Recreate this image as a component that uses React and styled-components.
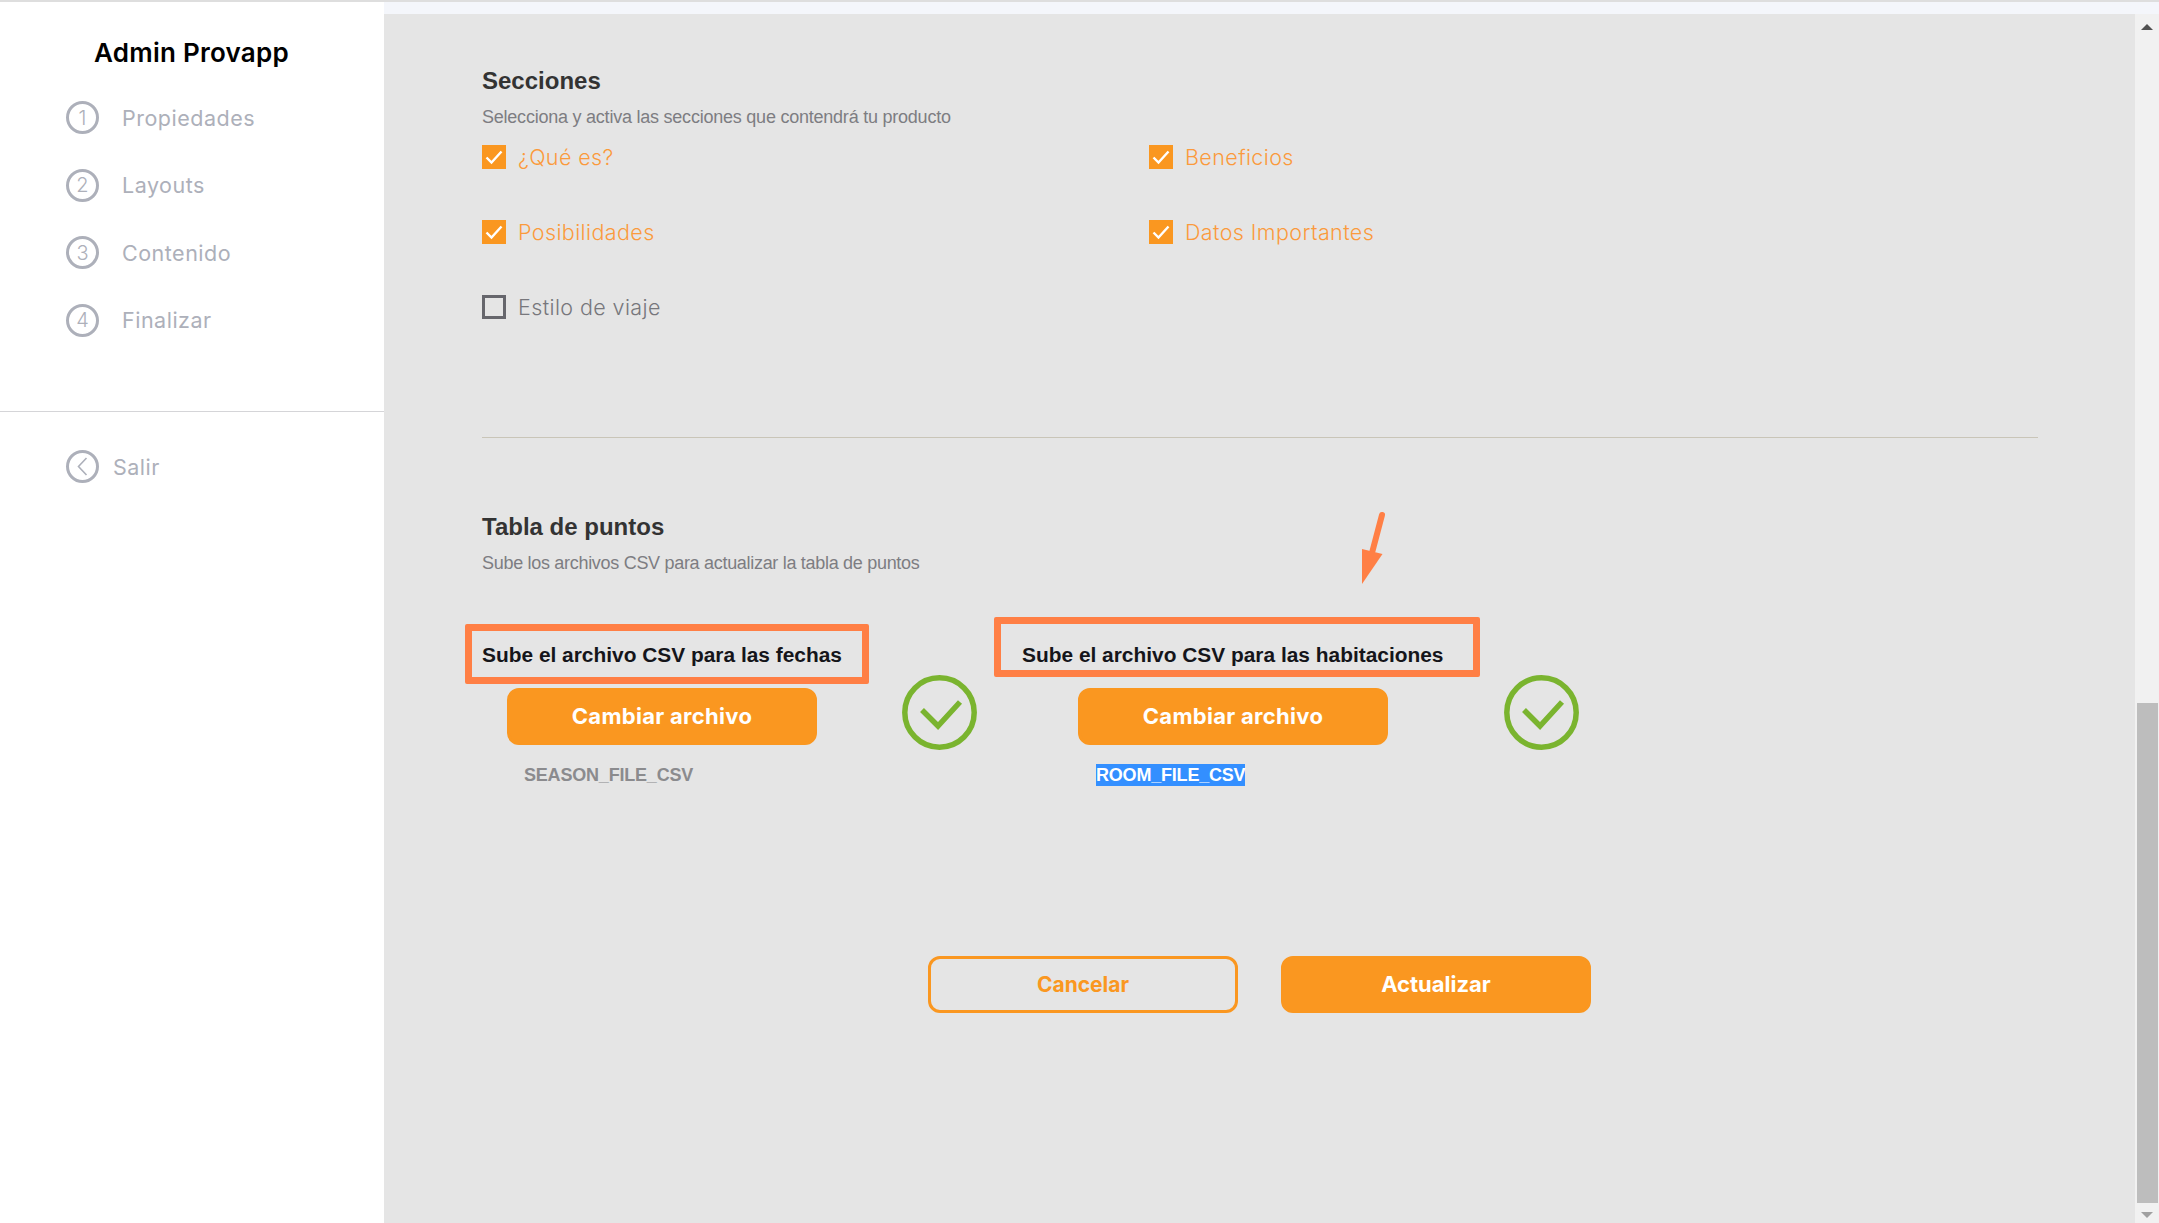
import React from 'react';
import styled, { createGlobalStyle } from 'styled-components';

const GlobalStyle = createGlobalStyle`
  html, body {
    margin: 0;
    padding: 0;
    height: 100%;
    overflow: hidden;
    background: #fff;
  }
  * {
    box-sizing: border-box;
  }
`;

const ORANGE = '#fa9720';
const MARK = '#ff7f45';
const GREEN = '#7ab42f';
const SIDE_FONT = "Inter, 'Open Sans', sans-serif";
const BODY_FONT = "'Liberation Sans', Arial, sans-serif";

const Page = styled.div`
  width: 2159px;
  height: 1223px;
  display: flex;
  flex-direction: column;
  overflow: hidden;
`;

const TopEdge = styled.div`
  height: 2px;
  flex: none;
  background: #dedede;
`;

const Body = styled.div`
  flex: 1;
  display: flex;
  min-height: 0;
`;

const Sidebar = styled.aside`
  width: 384px;
  flex: none;
  background: #fff;
  font-family: ${SIDE_FONT};
`;

const Brand = styled.h1`
  margin: 0;
  padding: 36px 0 0 94px;
  font-size: 26px;
  line-height: 30px;
  font-weight: 600;
  letter-spacing: 0.25px;
  color: #000;
  white-space: nowrap;
`;

const Steps = styled.ul`
  list-style: none;
  margin: 0;
  padding: 33px 0 0 66px;
  display: flex;
  flex-direction: column;
  gap: 34.6px;
  height: 344px;
  border-bottom: 1px solid #d5d5d8;
`;

const Step = styled.li`
  display: flex;
  align-items: center;
  height: 33px;
  gap: ${({ $gap }) => $gap || 23}px;
  color: #adb0ba;
  font-size: 21.5px;
  letter-spacing: 0.5px;
`;

const StepCircle = styled.span`
  width: 33px;
  height: 33px;
  flex: none;
  border: 3px solid #adb0ba;
  border-radius: 50%;
  display: flex;
  align-items: center;
  justify-content: center;
  font-size: 20px;
  font-weight: 300;
  letter-spacing: 0;
`;

const ExitList = styled.div`
  padding: 38px 0 0 66px;
`;

const Content = styled.div`
  flex: 1;
  min-width: 0;
  display: flex;
  flex-direction: column;
`;

const TopBand = styled.div`
  height: 12px;
  flex: none;
  background: #f4f6fb;
`;

const ContentRow = styled.div`
  flex: 1;
  display: flex;
  min-height: 0;
`;

const Main = styled.main`
  flex: 1;
  min-width: 0;
  background: #e5e5e5;
  padding: 52px 97px 0 98px;
  font-family: ${BODY_FONT};
`;

const SectionTitle = styled.h2`
  margin: ${({ $top }) => $top || 0}px 0 0;
  font-size: 24px;
  line-height: 30px;
  font-weight: 700;
  color: #333;
`;

const SectionHint = styled.p`
  margin: 9px 0 0;
  font-size: 18px;
  line-height: 24px;
  color: #7d7d82;
  letter-spacing: ${({ $spacing }) => $spacing || -0.23}px;
`;

const OptionGrid = styled.div`
  margin-top: 16px;
  display: grid;
  grid-template-columns: 667px 1fr;
  grid-auto-rows: 24px;
  row-gap: 51px;
`;

const Option = styled.label`
  display: flex;
  align-items: center;
  gap: 12px;
  font-family: ${SIDE_FONT};
  font-size: 21.5px;
  font-weight: 300;
  letter-spacing: 0.4px;
  color: ${({ $on }) => ($on ? '#fb9a3c' : '#77777c')};
`;

const Box = styled.span`
  width: 24px;
  height: 24px;
  flex: none;
  display: flex;
  align-items: center;
  justify-content: center;
  background: ${({ $on }) => ($on ? ORANGE : 'transparent')};
  border: ${({ $on }) => ($on ? 'none' : '3px solid #66666c')};
`;

const Divider = styled.hr`
  margin: 118px 0 0;
  border: none;
  height: 1px;
  background: #c9c5b8;
`;

const UploadRow = styled.div`
  margin-top: 68px;
  display: grid;
  grid-template-columns: 540px 1fr;
`;

const UploadColumn = styled.div`
  display: flex;
  flex-direction: column;
  align-items: flex-start;
`;

const UploadLabel = styled.div`
  position: relative;
  font-size: 20.9px;
  line-height: 24px;
  font-weight: 700;
  color: #15151a;
  white-space: nowrap;
`;

const MarkBox = styled.span`
  position: absolute;
  left: ${({ $left }) => $left}px;
  top: ${({ $top }) => $top}px;
  width: ${({ $width }) => $width}px;
  height: 60px;
  border: 7px solid ${MARK};
  border-radius: 2px;
`;

const ArrowMark = styled.svg`
  position: absolute;
  left: 336px;
  top: -132px;
`;

const UploadActions = styled.div`
  margin-top: 8px;
  display: flex;
  align-items: flex-start;
  padding-left: ${({ $indent }) => $indent}px;
  gap: ${({ $gap }) => $gap}px;
`;

const OrangeButton = styled.button`
  width: 310px;
  height: 57px;
  flex: none;
  margin-top: ${({ $top }) => $top || 0}px;
  border: 3px solid ${ORANGE};
  border-radius: 12px;
  background: ${({ $outline }) => ($outline ? 'transparent' : ORANGE)};
  color: ${({ $outline }) => ($outline ? ORANGE : '#fff')};
  font-family: ${SIDE_FONT};
  font-size: ${({ $size }) => $size || 22}px;
  font-weight: 700;
  letter-spacing: ${({ $spacing }) => $spacing || 0}px;
  padding: 0 0 1px;
`;

const FileName = styled.div`
  margin: 14px 0 0 ${({ $indent }) => $indent}px;
  font-size: 18px;
  line-height: 22px;
  font-weight: 700;
  letter-spacing: -0.2px;
  color: ${({ $selected }) => ($selected ? '#fff' : '#8b8b8e')};
  background: ${({ $selected }) => ($selected ? '#338fff' : 'transparent')};
`;

const FormActions = styled.div`
  margin: 170px 0 0 446px;
  display: flex;
  gap: 43px;
`;

const Scrollbar = styled.div`
  width: 24px;
  flex: none;
  background: #f1f1f1;
  display: flex;
  flex-direction: column;
  align-items: center;
`;

const ScrollUp = styled.span`
  margin-top: 10px;
  width: 0;
  height: 0;
  border-left: 6px solid transparent;
  border-right: 6px solid transparent;
  border-bottom: 6px solid #505050;
`;

const ScrollThumb = styled.div`
  margin: 673px 0 0 1px;
  width: 21px;
  height: 500px;
  background: #bdbdbd;
`;

const ScrollDown = styled.span`
  margin-top: 9px;
  width: 0;
  height: 0;
  border-left: 6px solid transparent;
  border-right: 6px solid transparent;
  border-top: 6px solid #a0a0a0;
`;

const CheckMark = () => (
  <svg width="18" height="15" viewBox="0 0 18 15" fill="none">
    <path d="M1.5 7.5 L6.5 12.5 L16.5 1.5" stroke="#fff" strokeWidth="2.4" />
  </svg>
);

const DoneBadge = () => (
  <svg width="75" height="75" viewBox="0 0 75 75" fill="none">
    <circle cx="37.5" cy="37.5" r="34.7" stroke={GREEN} strokeWidth="5.5" />
    <path d="M20 35 L36 51 L58 27" stroke={GREEN} strokeWidth="5.5" />
  </svg>
);

const steps = ['Propiedades', 'Layouts', 'Contenido', 'Finalizar'];

const options = [
  { label: '¿Qué es?', on: true },
  { label: 'Beneficios', on: true },
  { label: 'Posibilidades', on: true },
  { label: 'Datos Importantes', on: true },
  { label: 'Estilo de viaje', on: false },
];

const App = () => (
  <Page>
    <GlobalStyle />
    <TopEdge />
    <Body>
      <Sidebar>
        <Brand>Admin Provapp</Brand>
        <Steps>
          {steps.map((step, i) => (
            <Step key={step}>
              <StepCircle>{i + 1}</StepCircle>
              {step}
            </Step>
          ))}
        </Steps>
        <ExitList>
          <Step $gap={14}>
            <StepCircle>
              <svg width="11" height="19" viewBox="0 0 11 19" fill="none">
                <path d="M9.5 1 L1.5 9.5 L9.5 18" stroke="#adb0ba" strokeWidth="1.6" />
              </svg>
            </StepCircle>
            Salir
          </Step>
        </ExitList>
      </Sidebar>
      <Content>
        <TopBand />
        <ContentRow>
          <Main>
            <SectionTitle>Secciones</SectionTitle>
            <SectionHint>Selecciona y activa las secciones que contendrá tu producto</SectionHint>
            <OptionGrid>
              {options.map(option => (
                <Option key={option.label} $on={option.on}>
                  <Box $on={option.on}>{option.on && <CheckMark />}</Box>
                  {option.label}
                </Option>
              ))}
            </OptionGrid>
            <Divider />
            <SectionTitle $top={74}>Tabla de puntos</SectionTitle>
            <SectionHint $spacing={-0.3}>Sube los archivos CSV para actualizar la tabla de puntos</SectionHint>
            <UploadRow>
              <UploadColumn>
                <UploadLabel>
                  Sube el archivo CSV para las fechas
                  <MarkBox $left={-17} $top={-19} $width={404} />
                </UploadLabel>
                <UploadActions $indent={25} $gap={85}>
                  <OrangeButton $top={13} $spacing={0.3}>Cambiar archivo</OrangeButton>
                  <DoneBadge />
                </UploadActions>
                <FileName $indent={42}>SEASON_FILE_CSV</FileName>
              </UploadColumn>
              <UploadColumn>
                <UploadLabel>
                  Sube el archivo CSV para las habitaciones
                  <MarkBox $left={-28} $top={-26} $width={486} />
                  <ArrowMark width="30" height="78" viewBox="0 0 30 78">
                    <path d="M24 4 L14.5 40" stroke={MARK} strokeWidth="6" strokeLinecap="round" />
                    <path d="M4 38 L24.5 43 L4 73 Z" fill={MARK} />
                  </ArrowMark>
                </UploadLabel>
                <UploadActions $indent={56} $gap={116}>
                  <OrangeButton $top={13} $spacing={0.3}>Cambiar archivo</OrangeButton>
                  <DoneBadge />
                </UploadActions>
                <FileName $indent={74} $selected>ROOM_FILE_CSV</FileName>
              </UploadColumn>
            </UploadRow>
            <FormActions>
              <OrangeButton $outline $size={21}>Cancelar</OrangeButton>
              <OrangeButton>Actualizar</OrangeButton>
            </FormActions>
          </Main>
          <Scrollbar>
            <ScrollUp />
            <ScrollThumb />
            <ScrollDown />
          </Scrollbar>
        </ContentRow>
      </Content>
    </Body>
  </Page>
);

export default App;
